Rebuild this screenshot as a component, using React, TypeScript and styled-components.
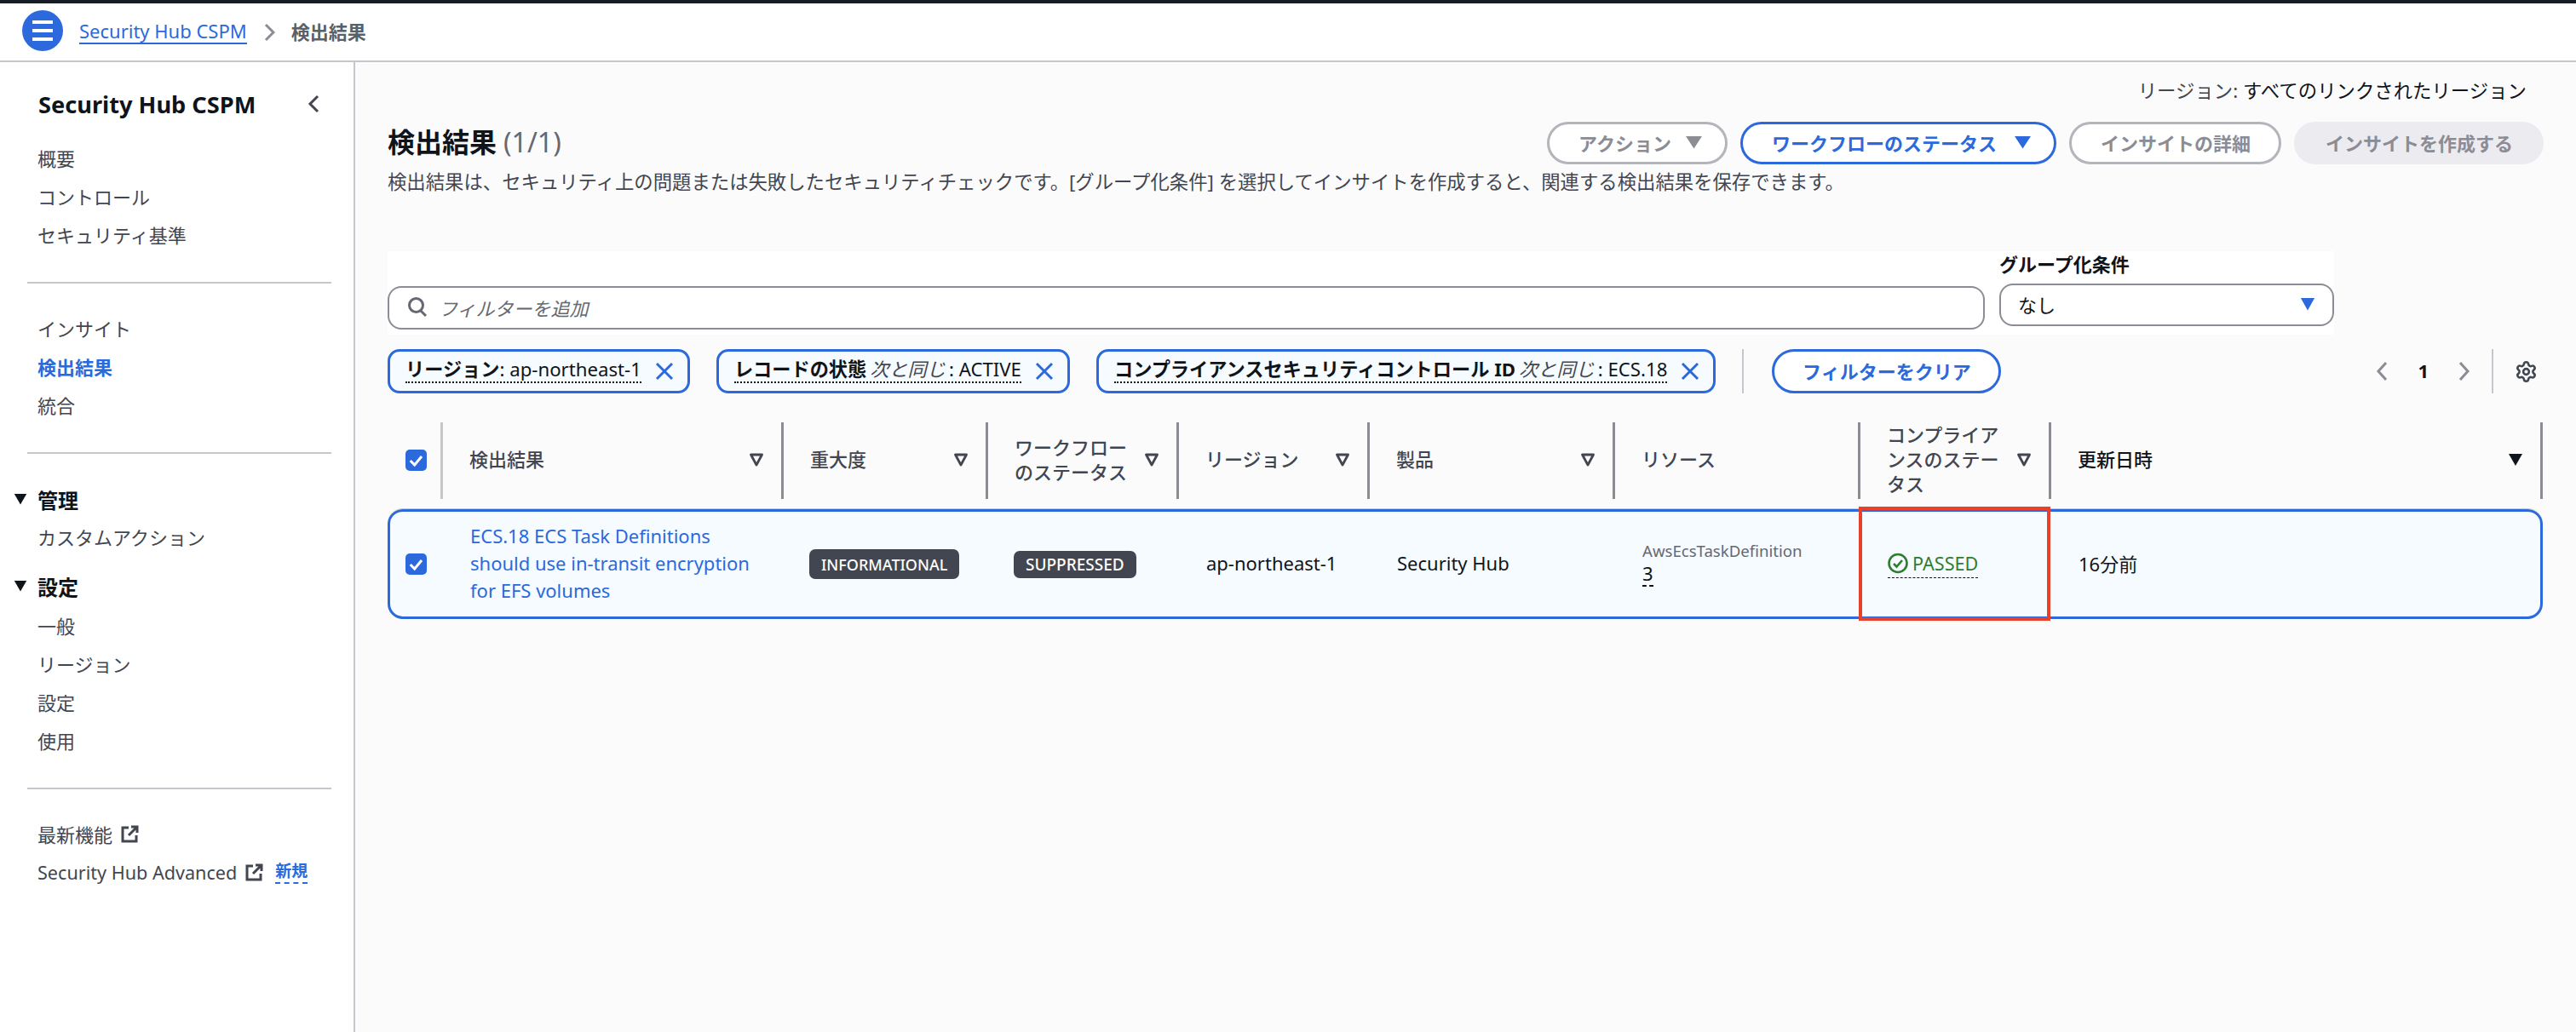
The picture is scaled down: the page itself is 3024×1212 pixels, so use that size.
import React from "react";
import styled, { createGlobalStyle } from "styled-components";
import { Settings } from "lucide-react";

const BLUE = "#2b69dc";
const INK = "#0f141a";
const GRAY = "#424650";
const COLUMNS = "62px 400px 240px 224px 224px 288px 288px 224px 580px";

const Global = createGlobalStyle`
  html, body { margin: 0; padding: 0; background: #fff; }
  body {
    font-family: "Noto Sans", "Noto Sans CJK JP", sans-serif;
    font-size: 22px;
    color: ${INK};
  }
  * { box-sizing: border-box; }
`;

const Page = styled.div`
  width: 3024px;
  height: 1212px;
  overflow: hidden;
  display: flex;
  flex-direction: column;
  border-top: 4px solid #161d26;
`;

const Crumbs = styled.header`
  height: 69px;
  flex: none;
  display: flex;
  align-items: center;
  padding-left: 26px;
  border-bottom: 2px solid #c6c6cd;
  background: #fff;
`;

const MenuButton = styled.span`
  width: 48px;
  height: 48px;
  margin-top: -4px;
  border-radius: 50%;
  background: ${BLUE};
  display: flex;
  align-items: center;
  justify-content: center;
`;

const CrumbLink = styled.a`
  margin-left: 19px;
  color: ${BLUE};
  line-height: 28px;
  border-bottom: 2px solid ${BLUE};
  margin-top: -2px;
`;

const CrumbSep = styled.span`
  display: flex;
  margin: 0 19px 0 20px;
`;

const CrumbCurrent = styled.span`
  color: #5b5f68;
  font-weight: 700;
  margin-top: -4px;
`;

const Body = styled.div`
  flex: 1;
  display: flex;
  min-height: 0;
`;

const Sidebar = styled.nav`
  width: 417px;
  flex: none;
  background: #fff;
  border-right: 2px solid #c6c6cd;
  padding-top: 29px;
`;

const SideHead = styled.div`
  height: 40px;
  padding: 0 44px 0 45px;
  display: flex;
  align-items: center;
  justify-content: space-between;
  font-size: 27.2px;
  font-weight: 700;
  margin-bottom: 22px;
`;

const SideSection = styled.div<{ $first?: boolean }>`
  margin: 0 26px 0 32px;
  padding: ${(p) => (p.$first ? "0" : "31px")} 0 32px;
  border-top: ${(p) => (p.$first ? "none" : "2px solid #c6c6cd")};
`;

const SideItem = styled.a<{ $active?: boolean }>`
  display: flex;
  align-items: center;
  gap: 10px;
  height: 45px;
  padding: 0 0 3px 12px;
  color: ${(p) => (p.$active ? BLUE : GRAY)};
  font-weight: ${(p) => (p.$active ? 700 : 400)};
  white-space: nowrap;
`;

const AdvancedLabel = styled.span`
  font-size: 21.6px;
`;

const GroupHead = styled.div<{ $gap?: boolean }>`
  position: relative;
  height: ${(p) => (p.$gap ? "47px" : "45px")};
  display: flex;
  align-items: center;
  padding: 0 0 ${(p) => (p.$gap ? "3px" : "1px")} 12px;
  font-size: 24px;
  font-weight: 700;
  margin-top: ${(p) => (p.$gap ? "12px" : "0")};
`;

const GroupCaret = styled.span`
  position: absolute;
  left: -16px;
  top: 15px;
  display: flex;
`;

const NewBadge = styled.span`
  margin-left: 4px;
  color: ${BLUE};
  font-weight: 700;
  font-size: 19px;
  line-height: 26px;
  border-bottom: 2px dashed ${BLUE};
`;

const Main = styled.main`
  position: relative;
  flex: 1;
  min-width: 0;
  background: #fbfbfc;
  padding: 19px 38px 0 38px;
`;

const RegionLine = styled.div`
  text-align: right;
  line-height: 30px;
  color: ${INK};
  padding: 0 20px 2px 0;
  height: 30px;
  font-size: 22.4px;
`;

const RegionKey = styled.span`
  color: ${GRAY};
`;

const TitleRow = styled.div`
  margin-top: 21px;
  display: flex;
  justify-content: space-between;
  align-items: center;
  height: 50px;
`;

const Title = styled.h1`
  margin: -3px 0 0;
  font-size: 32px;
  font-weight: 700;
  line-height: 50px;
`;

const TitleCount = styled.span`
  font-weight: 400;
  color: #656871;
  margin-left: 8px;
`;

const Actions = styled.div`
  display: flex;
  gap: 15px;
`;

const Btn = styled.button<{ $kind: "gray" | "primary" | "disabled"; $caret?: boolean }>`
  height: 50px;
  border-radius: 25px;
  font: inherit;
  font-weight: 700;
  display: flex;
  align-items: center;
  justify-content: center;
  gap: ${(p) => (p.$kind === "primary" ? "20px" : "16px")};
  padding: 0 ${(p) => (p.$caret ? "26px" : "33px")} 2px 34px;
  white-space: nowrap;
  background: ${(p) => (p.$kind === "disabled" ? "#ebebf0" : "#fff")};
  color: ${(p) => (p.$kind === "primary" ? BLUE : "#8c8c94")};
  border: 3px solid
    ${(p) => (p.$kind === "primary" ? BLUE : p.$kind === "gray" ? "#b4b4bb" : "#ebebf0")};
`;

const Description = styled.p`
  margin: 6px 0 0;
  line-height: 30px;
  color: ${GRAY};
  font-size: 22.36px;
  white-space: nowrap;
`;

const FilterPanel = styled.section`
  margin-top: 66px;
  width: 2285px;
  height: 98px;
  background: #fff;
  display: flex;
  gap: 17px;
`;

const SearchBox = styled.div`
  width: 1875px;
  height: 51px;
  margin-top: 41px;
  border: 2px solid #8c8c94;
  border-radius: 16px;
  background: #fff;
  display: flex;
  align-items: center;
  padding: 0 0 2px 21px;
  gap: 13px;
`;

const Placeholder = styled.span`
  font-style: italic;
  color: #656871;
`;

const GroupBy = styled.div`
  flex: 1;
  display: flex;
  flex-direction: column;
`;

const GroupLabel = styled.label`
  font-weight: 700;
  font-size: 22px;
  height: 38px;
  line-height: 31px;
`;

const GroupSelect = styled.div`
  height: 50px;
  border: 2px solid #8c8c94;
  border-radius: 16px;
  display: flex;
  align-items: center;
  justify-content: space-between;
  padding: 0 20px 2px 20px;
`;

const ChipRow = styled.div`
  margin-top: 17px;
  height: 52px;
  display: flex;
  align-items: center;
`;

const Chip = styled.div`
  height: 52px;
  margin-right: 31px;
  background: #f5fbff;
  border: 3px solid ${BLUE};
  border-radius: 14px;
  display: flex;
  align-items: center;
  gap: 16px;
  padding: 0 16px 3px 18px;
  font-size: 22.2px;
  white-space: nowrap;
`;

const ChipText = styled.span`
  line-height: 28px;
  border-bottom: 2px dotted ${INK};
`;

const ChipKey = styled.b`
  font-weight: 700;
`;

const ChipOp = styled.i`
  color: ${GRAY};
  margin: 0 4px;
`;

const VRule = styled.span`
  width: 2px;
  height: 52px;
  background: #c6c6cd;
`;

const ClearBtn = styled.button`
  margin-left: 33px;
  width: 269px;
  height: 52px;
  border-radius: 26px;
  border: 3px solid ${BLUE};
  background: #fff;
  color: ${BLUE};
  font: inherit;
  font-weight: 700;
  padding-bottom: 3px;
`;

const Pager = styled.div`
  margin-left: auto;
  display: flex;
  align-items: center;
  gap: 27px;
  padding-right: 7px;
`;

const PageNo = styled.span`
  font-weight: 700;
  margin: 0 8px;
  padding-bottom: 3px;
`;

const PagerRule = styled(VRule)`
  margin: 0 -2px;
`;

const Table = styled.div`
  margin-top: 34px;
  width: 2530px;
`;

const HeadRow = styled.div`
  display: grid;
  grid-template-columns: ${COLUMNS};
  height: 86px;
`;

const HeadCheck = styled.div`
  display: flex;
  align-items: center;
  padding: 0 0 2px 21px;
`;

const HeadCell = styled.div<{ $light?: boolean; $sorted?: boolean; $end?: boolean }>`
  display: flex;
  align-items: center;
  justify-content: space-between;
  gap: 12px;
  padding: 0 ${(p) => (p.$end ? "20px" : "20px")} 3px 31px;
  border-left: 3px solid ${(p) => (p.$light ? "#c6c6cd" : "#8c8c94")};
  border-right: ${(p) => (p.$end ? "3px solid #8c8c94" : "none")};
  color: ${(p) => (p.$sorted ? INK : GRAY)};
  font-weight: 500;
  line-height: 29px;
`;

const Row = styled.div`
  margin-top: 15px;
  border-top: 1px solid #c6c6cd;
  display: grid;
  grid-template-columns: ${COLUMNS};
  height: 130px;
  background: #f5fbff;
  border-radius: 18px;
  box-shadow: inset 0 0 0 3px ${BLUE};
`;

const CheckCell = styled.div`
  display: flex;
  align-items: center;
  padding-left: 21px;
`;

const Cell = styled.div`
  display: flex;
  flex-direction: column;
  justify-content: center;
  align-items: flex-start;
  padding: 0 0 3px 35px;
  white-space: nowrap;
`;

const FindingCell = styled(Cell)`
  padding-right: 25px;
  white-space: normal;
`;

const FindingLink = styled.a`
  color: ${BLUE};
  line-height: 32px;
`;

const Tag = styled.span<{ $h: number; $size: number }>`
  margin: 3px 0 0 -2px;
  height: ${(p) => p.$h}px;
  display: flex;
  align-items: center;
  padding: 0 14px;
  border-radius: 7px;
  background: ${GRAY};
  color: #fff;
  font-size: ${(p) => p.$size}px;
  font-weight: 500;
`;

const ResourceType = styled.span`
  font-size: 18.6px;
  line-height: 28px;
  color: #656871;
`;

const ResourceCount = styled.span`
  line-height: 24px;
  height: 28px;
  border-bottom: 2px dashed ${INK};
`;

const Status = styled.span`
  display: flex;
  align-items: center;
  gap: 5px;
  margin-top: 4px;
  color: #2f7d32;
  font-size: 21.6px;
  height: 32px;
  padding-bottom: 3px;
  border-bottom: 1.5px dashed ${INK};
`;

const Highlight = styled.div`
  position: absolute;
  left: 1765px;
  top: 522px;
  width: 225px;
  height: 134px;
  border: 4px solid #e8402a;
  pointer-events: none;
`;

const Checkbox = () => (
  <svg width="25" height="25" viewBox="0 0 25 25">
    <rect width="25" height="25" rx="5" fill={BLUE} />
    <path d="M5.700 13l5 5L19 8" fill="none" stroke="#fff" strokeWidth="3" />
  </svg>
);

const SortOutline = () => (
  <svg width="18" height="16" viewBox="0 0 18 16" fill="none" style={{ flex: "none" }}>
    <path d="M2.500 2h13L9 14z" stroke={GRAY} strokeWidth="2.8" strokeLinejoin="round" />
  </svg>
);

const SortFilled = () => (
  <svg width="18" height="16" viewBox="0 0 18 16" style={{ flex: "none" }}>
    <path d="M1 1h16L9 15z" fill={INK} />
  </svg>
);

const Caret = ({ color, w = 21, h = 16 }: { color: string; w?: number; h?: number }) => (
  <svg width={w} height={h} viewBox="0 0 20 15" preserveAspectRatio="none">
    <path d="M1 1h18L10 14.500z" fill={color} />
  </svg>
);

const External = () => (
  <svg width="21" height="21" viewBox="0 0 21 21" fill="none" stroke={GRAY} strokeWidth="3">
    <path d="M9 3H2v16h16v-7" />
    <path d="M12 2h7v7M19 2L9 12" />
  </svg>
);

const CloseX = () => (
  <svg width="22" height="22" viewBox="0 0 22 22" fill="none" stroke={BLUE} strokeWidth="3" style={{ flex: "none", marginTop: 3 }}>
    <path d="M2 2l18 18M20 2L2 20" />
  </svg>
);

const PagerChevron = ({ dir }: { dir: "l" | "r" }) => (
  <svg width="14" height="24" viewBox="0 0 14 24" fill="none" stroke="#8c8c94" strokeWidth="3">
    <path d={dir === "l" ? "M12 2L3 12l9 10" : "M2 2l9 10-9 10"} />
  </svg>
);

export default function App() {
  return (
    <Page>
      <Global />
      <Crumbs>
        <MenuButton>
          <svg width="24" height="26" viewBox="0 0 24 26" fill="#fff">
            <rect y="1" width="24" height="4" />
            <rect y="11" width="24" height="4" />
            <rect y="21" width="24" height="4" />
          </svg>
        </MenuButton>
        <CrumbLink>Security Hub CSPM</CrumbLink>
        <CrumbSep>
          <svg width="13" height="22" viewBox="0 0 13 22" fill="none" stroke="#8c8c94" strokeWidth="3">
            <path d="M2 2l9 9-9 9" />
          </svg>
        </CrumbSep>
        <CrumbCurrent>検出結果</CrumbCurrent>
      </Crumbs>
      <Body>
        <Sidebar>
          <SideHead>
            <span>Security Hub CSPM</span>
            <svg width="14" height="22" viewBox="0 0 14 22" fill="none" stroke={GRAY} strokeWidth="3" style={{ marginRight: -4 }}>
              <path d="M12 2l-9 9 9 9" />
            </svg>
          </SideHead>
          <SideSection $first>
            <SideItem>概要</SideItem>
            <SideItem>コントロール</SideItem>
            <SideItem>セキュリティ基準</SideItem>
          </SideSection>
          <SideSection>
            <SideItem>インサイト</SideItem>
            <SideItem $active>検出結果</SideItem>
            <SideItem>統合</SideItem>
          </SideSection>
          <SideSection>
            <GroupHead>
              <GroupCaret><Caret color={INK} w={16} h={14} /></GroupCaret>
              管理
            </GroupHead>
            <SideItem>カスタムアクション</SideItem>
            <GroupHead $gap>
              <GroupCaret><Caret color={INK} w={16} h={14} /></GroupCaret>
              設定
            </GroupHead>
            <SideItem>一般</SideItem>
            <SideItem>リージョン</SideItem>
            <SideItem>設定</SideItem>
            <SideItem>使用</SideItem>
          </SideSection>
          <SideSection>
            <SideItem>最新機能 <External /></SideItem>
            <SideItem><AdvancedLabel>Security Hub Advanced</AdvancedLabel> <External /><NewBadge>新規</NewBadge></SideItem>
          </SideSection>
        </Sidebar>
        <Main>
          <RegionLine>
            <RegionKey>リージョン:</RegionKey> すべてのリンクされたリージョン
          </RegionLine>
          <TitleRow>
            <Title>検出結果<TitleCount>(1/1)</TitleCount></Title>
            <Actions>
              <Btn $kind="gray" $caret>アクション <Caret color="#8c8c94" /></Btn>
              <Btn $kind="primary" $caret>ワークフローのステータス <Caret color={BLUE} /></Btn>
              <Btn $kind="gray">インサイトの詳細</Btn>
              <Btn $kind="disabled">インサイトを作成する</Btn>
            </Actions>
          </TitleRow>
          <Description>
            検出結果は、セキュリティ上の問題または失敗したセキュリティチェックです。[グループ化条件] を選択してインサイトを作成すると、関連する検出結果を保存できます。
          </Description>
          <FilterPanel>
            <SearchBox>
              <svg width="24" height="25" viewBox="0 0 24 25" fill="none" stroke="#656871" strokeWidth="3">
                <circle cx="10.500" cy="10.500" r="8" />
                <path d="M16 17l6 6" />
              </svg>
              <Placeholder>フィルターを追加</Placeholder>
            </SearchBox>
            <GroupBy>
              <GroupLabel>グループ化条件</GroupLabel>
              <GroupSelect>
                なし
                <Caret color={BLUE} w={18} h={16} />
              </GroupSelect>
            </GroupBy>
          </FilterPanel>
          <ChipRow>
            <Chip>
              <ChipText><ChipKey>リージョン</ChipKey>: ap-northeast-1</ChipText>
              <CloseX />
            </Chip>
            <Chip>
              <ChipText><ChipKey>レコードの状態</ChipKey><ChipOp>次と同じ</ChipOp>: ACTIVE</ChipText>
              <CloseX />
            </Chip>
            <Chip>
              <ChipText><ChipKey>コンプライアンスセキュリティコントロール ID</ChipKey><ChipOp>次と同じ</ChipOp>: ECS.18</ChipText>
              <CloseX />
            </Chip>
            <VRule />
            <ClearBtn>フィルターをクリア</ClearBtn>
            <Pager>
              <PagerChevron dir="l" />
              <PageNo>1</PageNo>
              <PagerChevron dir="r" />
              <PagerRule />
              <Settings size={27} color={GRAY} strokeWidth={2.3} />
            </Pager>
          </ChipRow>
          <Table>
            <HeadRow>
              <HeadCheck><Checkbox /></HeadCheck>
              <HeadCell $light>検出結果<SortOutline /></HeadCell>
              <HeadCell>重大度<SortOutline /></HeadCell>
              <HeadCell>ワークフローのステータス<SortOutline /></HeadCell>
              <HeadCell>リージョン<SortOutline /></HeadCell>
              <HeadCell>製品<SortOutline /></HeadCell>
              <HeadCell>リソース</HeadCell>
              <HeadCell>コンプライアンスのステータス<SortOutline /></HeadCell>
              <HeadCell $sorted $end>更新日時<SortFilled /></HeadCell>
            </HeadRow>
            <Row>
              <CheckCell><Checkbox /></CheckCell>
              <FindingCell>
                <FindingLink>ECS.18 ECS Task Definitions should use in-transit encryption for EFS volumes</FindingLink>
              </FindingCell>
              <Cell><Tag $h={35} $size={18}>INFORMATIONAL</Tag></Cell>
              <Cell><Tag $h={32} $size={19}>SUPPRESSED</Tag></Cell>
              <Cell>ap-northeast-1</Cell>
              <Cell>Security Hub</Cell>
              <Cell>
                <ResourceType>AwsEcsTaskDefinition</ResourceType>
                <ResourceCount>3</ResourceCount>
              </Cell>
              <Cell>
                <Status>
                  <svg width="24" height="25" viewBox="0 0 24 24" fill="none" stroke="#2f7d32" strokeWidth="2.6">
                    <circle cx="12" cy="12" r="10.500" />
                    <path d="M7 12.500l3.500 3.500L17 8.500" />
                  </svg>
                  PASSED
                </Status>
              </Cell>
              <Cell>16分前</Cell>
            </Row>
          </Table>
          <Highlight />
        </Main>
      </Body>
    </Page>
  );
}
